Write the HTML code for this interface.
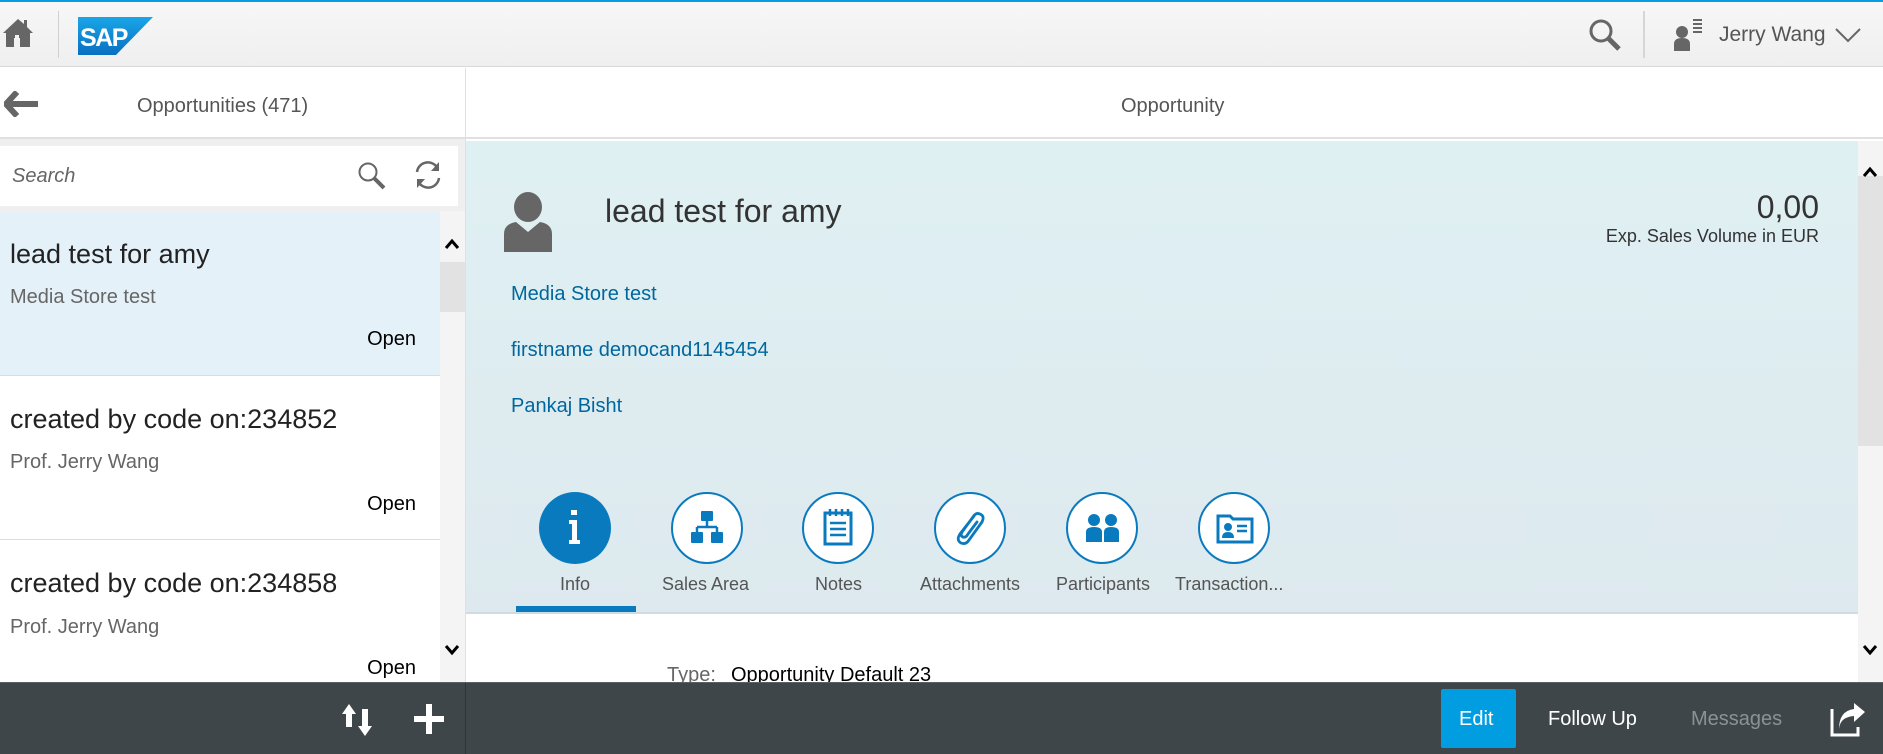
<!DOCTYPE html>
<html><head><meta charset="utf-8"><style>
*{margin:0;padding:0;box-sizing:border-box}
body{width:1883px;height:754px;overflow:hidden;font-family:"Liberation Sans",Arial,sans-serif;background:#fff;position:relative;color:#333}
.a{position:absolute}
.t{position:absolute;white-space:nowrap}
</style></head><body>
<div class="a" style="left:0;top:0;width:1883px;height:2px;background:#0a9be0"></div>
<div class="a" style="left:0;top:2px;width:1883px;height:65px;background:linear-gradient(#f7f7f7,#efefef);border-bottom:1px solid #d9d9d9"></div>
<svg class="a" style="left:2px;top:17px" width="32" height="32" viewBox="0 0 32 32"><path d="M16 2 L1 16 L4 16 L4 30 L12 30 L12 21 L18 21 L18 30 L28 30 L28 16 L31 16 L25 10 L25 3 L22 3 L22 7 Z" fill="#666"/><rect x="13" y="18" width="4" height="4" fill="#f2f2f2"/></svg>
<div class="a" style="left:58px;top:11px;width:1px;height:47px;background:#d0d0d0"></div>
<svg class="a" style="left:78px;top:17px" width="75" height="38" viewBox="0 0 75 38"><defs><linearGradient id="g" x1="0" y1="0" x2="0" y2="1"><stop offset="0" stop-color="#19a6e8"/><stop offset="1" stop-color="#0a6fc2"/></linearGradient></defs><path d="M0 0 H75 L38 38 H0 Z" fill="url(#g)"/><text x="2" y="29" font-family="Liberation Sans" font-weight="bold" font-size="25" fill="#fff" letter-spacing="-1.5">SAP</text></svg>
<svg class="a" style="left:1588px;top:18px" width="34" height="34" viewBox="0 0 34 34"><circle cx="13" cy="13" r="10" fill="none" stroke="#666" stroke-width="3"/><path d="M20 20 L31 31" stroke="#666" stroke-width="5"/></svg>
<div class="a" style="left:1643px;top:11px;width:2px;height:47px;background:#d6d6d6"></div>
<svg class="a" style="left:1672px;top:18px" width="34" height="34" viewBox="0 0 34 34"><circle cx="10" cy="14" r="6" fill="#666"/><path d="M2 33 V26 Q2 20 10 20 Q18 20 18 26 V33 Z" fill="#666"/><path d="M21 2H30M21 6H30M21 10H30M21 14H30" stroke="#666" stroke-width="2"/></svg>
<div class="t" style="left:1719px;top:23px;font-size:21px;color:#555">Jerry Wang</div>
<svg class="a" style="left:1835px;top:28px" width="26" height="16" viewBox="0 0 26 16"><path d="M1 1 L13 13 L25 1" fill="none" stroke="#666" stroke-width="2"/></svg>
<div class="a" style="left:0;top:68px;width:1883px;height:71px;background:#fff;border-bottom:2px solid #e0e0e0"></div>
<div class="a" style="left:465px;top:68px;width:1px;height:71px;background:#e0e0e0"></div>
<svg class="a" style="left:4px;top:91px" width="36" height="26" viewBox="0 0 36 26"><path d="M13 1 L2 13 L13 25 M3 13 H34" fill="none" stroke="#666" stroke-width="6" stroke-linejoin="round"/></svg>
<div class="t" style="left:137px;top:95px;font-size:20px;color:#555">Opportunities (471)</div>
<div class="t" style="left:1121px;top:95px;font-size:20px;color:#555">Opportunity</div>
<div class="a" style="left:0;top:139px;width:465px;height:72px;background:#efefef"></div>
<div class="a" style="left:0;top:146px;width:458px;height:60px;background:#fff"></div>
<div class="t" style="left:12px;top:165px;font-size:20px;font-style:italic;color:#666">Search</div>
<svg class="a" style="left:357px;top:161px" width="30" height="30" viewBox="0 0 30 30"><circle cx="11" cy="11" r="8.5" fill="none" stroke="#666" stroke-width="2"/><path d="M17 17 L27 27" stroke="#666" stroke-width="4"/></svg>
<svg class="a" style="left:412px;top:159px" width="32" height="32" viewBox="0 0 32 32"><path d="M5 13 A11 11 0 0 1 26 10" fill="none" stroke="#666" stroke-width="2.5"/><path d="M27 3 V12 H19 Z" fill="#666"/><path d="M27 19 A11 11 0 0 1 6 22" fill="none" stroke="#666" stroke-width="2.5"/><path d="M5 29 V20 H13 Z" fill="#666"/></svg>
<div class="a" style="left:0;top:211px;width:440px;height:165px;background:#e5f1f9;border-bottom:1px solid #dcdcdc"></div>
<div class="a" style="left:0;top:376px;width:440px;height:164px;background:#fff;border-bottom:1px solid #dcdcdc"></div>
<div class="a" style="left:0;top:541px;width:440px;height:141px;background:#fff"></div>
<div class="t" style="left:10px;top:239px;font-size:27px;color:#222">lead test for amy</div>
<div class="t" style="left:10px;top:286px;font-size:20px;color:#666">Media Store test</div>
<div class="t" style="right:1467px;top:328px;font-size:20px;color:#000">Open</div>
<div class="t" style="left:10px;top:404px;font-size:27px;color:#222">created by code on:234852</div>
<div class="t" style="left:10px;top:451px;font-size:20px;color:#666">Prof. Jerry Wang</div>
<div class="t" style="right:1467px;top:493px;font-size:20px;color:#000">Open</div>
<div class="t" style="left:10px;top:568px;font-size:27px;color:#222">created by code on:234858</div>
<div class="t" style="left:10px;top:616px;font-size:20px;color:#666">Prof. Jerry Wang</div>
<div class="t" style="right:1467px;top:657px;font-size:20px;color:#000">Open</div>
<div class="a" style="left:440px;top:211px;width:25px;height:471px;background:#f4f4f4"></div>
<div class="a" style="left:440px;top:262px;width:25px;height:50px;background:#e2e2e2"></div>
<svg class="a" style="left:444px;top:238px" width="16" height="12" viewBox="0 0 16 12"><path d="M2 10 L8 3 L14 10" fill="none" stroke="#000" stroke-width="3"/></svg>
<svg class="a" style="left:444px;top:644px" width="16" height="12" viewBox="0 0 16 12"><path d="M2 2 L8 9 L14 2" fill="none" stroke="#000" stroke-width="3"/></svg>
<div class="a" style="left:465px;top:139px;width:1px;height:543px;background:#e0e0e0"></div>
<div class="a" style="left:466px;top:141px;width:1392px;height:471px;background:linear-gradient(#dff0f3,#dde9ee)"></div>
<div class="a" style="left:466px;top:612px;width:1392px;height:2px;background:#d0dce2"></div>
<svg class="a" style="left:504px;top:192px" width="48" height="60" viewBox="0 0 48 60"><ellipse cx="24" cy="15" rx="14" ry="15" fill="#666"/><path d="M0 60 V42 Q0 32 12 30 L24 40 L36 30 Q48 32 48 42 V60 Z" fill="#666"/></svg>
<div class="t" style="left:605px;top:193px;font-size:32px;color:#333">lead test for amy</div>
<div class="t" style="right:64px;top:189px;font-size:32px;color:#333">0,00</div>
<div class="t" style="right:64px;top:226px;font-size:18px;color:#333">Exp. Sales Volume in EUR</div>
<div class="t" style="left:511px;top:283px;font-size:20px;color:#00679e">Media Store test</div>
<div class="t" style="left:511px;top:339px;font-size:20px;color:#00679e">firstname democand1145454</div>
<div class="t" style="left:511px;top:395px;font-size:20px;color:#00679e">Pankaj Bisht</div>
<div class="a" style="left:539px;top:492px;width:72px;height:72px;border-radius:50%;background:#0a7abf"></div>
<svg class="a" style="left:565px;top:510px" width="20" height="36" viewBox="0 0 20 36"><rect x="6" y="0" width="6" height="5" fill="#fff"/><path d="M4 10 H12 V30 H15 V34 H4 V30 H7 V14 H4 Z" fill="#fff"/></svg>
<div class="a" style="left:671px;top:492px;width:72px;height:72px;border-radius:50%;border:2px solid #0a7abf;background:#fff"></div>
<svg class="a" style="left:689px;top:510px" width="36" height="36" viewBox="0 0 36 36"><rect x="12" y="1" width="12" height="10" rx="1" fill="#0a7abf"/><path d="M18 11 V17 M8 17 H28 M8 17 V23 M28 17 V23" stroke="#0a7abf" stroke-width="2.5" fill="none"/><rect x="2" y="22" width="12" height="11" rx="1" fill="#0a7abf"/><rect x="22" y="22" width="12" height="11" rx="1" fill="#0a7abf"/></svg>
<div class="a" style="left:802px;top:492px;width:72px;height:72px;border-radius:50%;border:2px solid #0a7abf;background:#fff"></div>
<svg class="a" style="left:822px;top:508px" width="32" height="38" viewBox="0 0 32 38"><rect x="3" y="5" width="26" height="31" fill="none" stroke="#0a7abf" stroke-width="3"/><path d="M8 1V8M14 1V8M20 1V8M26 1V8" stroke="#0a7abf" stroke-width="2.5"/><path d="M8 15H24M8 21H24M8 27H24" stroke="#0a7abf" stroke-width="2.5"/></svg>
<div class="a" style="left:934px;top:492px;width:72px;height:72px;border-radius:50%;border:2px solid #0a7abf;background:#fff"></div>
<svg class="a" style="left:952px;top:510px" width="36" height="36" viewBox="0 0 36 36"><path d="M22 6 L8 24 Q4 30 9 33 Q14 35 17 30 L30 12 Q33 6 28 4 Q24 2 21 7 L10 22 Q8 26 11 27 Q14 28 16 24 L25 12" fill="none" stroke="#0a7abf" stroke-width="2.8" stroke-linecap="round"/></svg>
<div class="a" style="left:1066px;top:492px;width:72px;height:72px;border-radius:50%;border:2px solid #0a7abf;background:#fff"></div>
<svg class="a" style="left:1084px;top:512px" width="38" height="32" viewBox="0 0 38 32"><circle cx="10" cy="8" r="6" fill="#0a7abf"/><circle cx="27" cy="8" r="6" fill="#0a7abf"/><path d="M2 30 V20 Q2 15 10 15 Q18 15 18 20 V30 Z" fill="#0a7abf"/><path d="M20 30 V20 Q20 15 27 15 Q35 15 35 20 V30 Z" fill="#0a7abf"/></svg>
<div class="a" style="left:1198px;top:492px;width:72px;height:72px;border-radius:50%;border:2px solid #0a7abf;background:#fff"></div>
<svg class="a" style="left:1216px;top:512px" width="38" height="32" viewBox="0 0 38 32"><path d="M2 30 V4 H14 L17 7 H36 V30 Z" fill="none" stroke="#0a7abf" stroke-width="3"/><circle cx="12" cy="15" r="4" fill="#0a7abf"/><path d="M6 26 Q6 20 12 20 Q18 20 18 26Z" fill="#0a7abf"/><path d="M21 14H31M21 19H31" stroke="#0a7abf" stroke-width="2.5"/></svg>
<div class="t" style="left:560px;top:574px;font-size:18px;color:#555">Info</div>
<div class="t" style="left:662px;top:574px;font-size:18px;color:#555">Sales Area</div>
<div class="t" style="left:815px;top:574px;font-size:18px;color:#555">Notes</div>
<div class="t" style="left:920px;top:574px;font-size:18px;color:#555">Attachments</div>
<div class="t" style="left:1056px;top:574px;font-size:18px;color:#555">Participants</div>
<div class="t" style="left:1175px;top:574px;font-size:18px;color:#555">Transaction...</div>
<div class="a" style="left:516px;top:606px;width:120px;height:6px;background:#0a7abf"></div>
<div class="t" style="left:667px;top:664px;font-size:20px;color:#666">Type:</div>
<div class="t" style="left:731px;top:664px;font-size:20px;color:#000">Opportunity Default 23</div>
<div class="a" style="left:1858px;top:141px;width:25px;height:541px;background:#f4f4f4"></div>
<div class="a" style="left:1858px;top:176px;width:25px;height:270px;background:#e2e2e2"></div>
<svg class="a" style="left:1862px;top:166px" width="16" height="12" viewBox="0 0 16 12"><path d="M2 10 L8 3 L14 10" fill="none" stroke="#000" stroke-width="3"/></svg>
<svg class="a" style="left:1862px;top:644px" width="16" height="12" viewBox="0 0 16 12"><path d="M2 2 L8 9 L14 2" fill="none" stroke="#000" stroke-width="3"/></svg>
<div class="a" style="left:0;top:682px;width:1883px;height:72px;background:#3f4649;border-top:1px solid #5a6164"></div>
<div class="a" style="left:465px;top:683px;width:1px;height:71px;background:#2f3537"></div>
<svg class="a" style="left:340px;top:703px" width="36" height="34" viewBox="0 0 36 34"><path d="M9 1 L2 11 H6 V24 H12 V11 H16 Z M25 33 L18 23 H22 V6 H28 V23 H32 Z" fill="#fff"/></svg>
<svg class="a" style="left:413px;top:703px" width="32" height="32" viewBox="0 0 32 32"><path d="M13 1H19V13H31V19H19V31H13V19H1V13H13Z" fill="#fff"/></svg>
<div class="a" style="left:1441px;top:689px;width:75px;height:59px;background:#009de0;border-radius:2px"></div>
<div class="t" style="left:1459px;top:708px;font-size:20px;color:#fff">Edit</div>
<div class="t" style="left:1548px;top:708px;font-size:20px;color:#fff">Follow Up</div>
<div class="t" style="left:1691px;top:708px;font-size:20px;color:#8c9194">Messages</div>
<svg class="a" style="left:1830px;top:703px" width="36" height="34" viewBox="0 0 36 34"><path d="M2 6 V32 H28 V24" fill="none" stroke="#fff" stroke-width="3"/><path d="M9 26 Q10 14 24 13 V19 L35 9 L24 0 V6 Q9 8 9 26Z" fill="#fff"/></svg>
</body></html>
